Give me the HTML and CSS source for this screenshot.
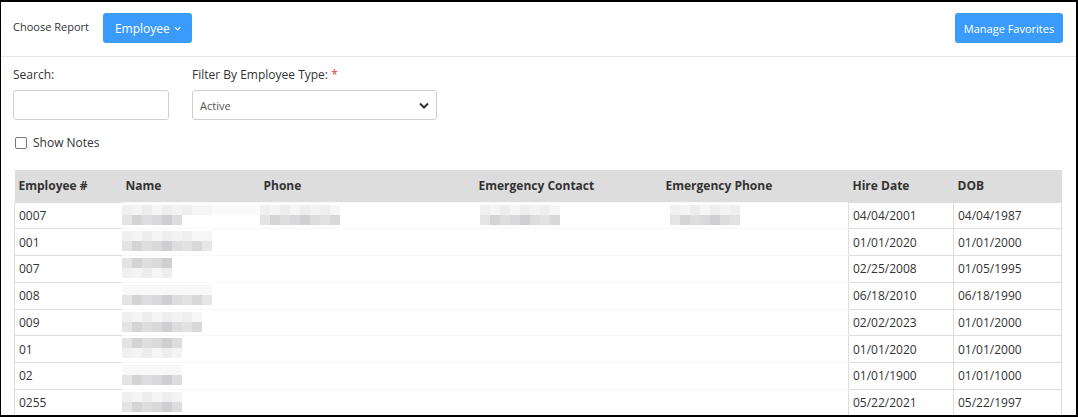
FILE: index.html
```html
<!DOCTYPE html>
<html>
<head>
<meta charset="utf-8">
<link rel="stylesheet" href="styles.css">
</head>
<body>
<div class="frame">
  <div class="topbar">
    <div class="left">
      <span class="choose">Choose Report</span>
      <button class="btn btn-emp">Employee
        <svg width="8" height="5" viewBox="0 0 8 5"><path d="M1 1l3 3 3-3" fill="none" stroke="#fff" stroke-width="1.3"/></svg>
      </button>
    </div>
    <button class="btn btn-fav">Manage Favorites</button>
  </div>
  <div class="filters">
    <div class="fields">
      <div class="field">
        <label class="lbl">Search:</label>
        <div class="input search"></div>
      </div>
      <div class="field">
        <label class="lbl">Filter By Employee Type: <span class="req">*</span></label>
        <div class="input select"><span>Active</span>
          <svg width="10" height="7" viewBox="0 0 10 7"><path d="M1 1.5l4 4 4-4" fill="none" stroke="#333" stroke-width="2"/></svg>
        </div>
      </div>
    </div>
    <div class="check"><span class="box"></span><span>Show Notes</span></div>
  </div>
  <div class="tablewrap">
    <table class="grid">
      <colgroup>
        <col class="c1"><col class="c2"><col class="c3"><col class="c4"><col class="c5"><col class="c6"><col class="c7">
      </colgroup>
      <thead>
        <tr><th>Employee #</th><th>Name</th><th>Phone</th><th>Emergency Contact</th><th>Emergency Phone</th><th>Hire Date</th><th>DOB</th></tr>
      </thead>
      <tbody>
        <tr class="r1"><td>0007</td>
          <td class="bl"><div class="pix"><span class="l" style="width:140px"></span><span class="d" style="width:60px"></span></div></td>
          <td class="bl"><div class="pix"><span class="l" style="width:80px"></span><span class="d" style="width:80px"></span></div></td>
          <td class="bl"><div class="pix pad"><span class="l" style="width:80px"></span><span class="d" style="width:80px"></span></div></td>
          <td class="bl end"><div class="pix pad2"><span class="l" style="width:70px"></span><span class="d" style="width:70px"></span></div></td>
          <td>04/04/2001</td><td>04/04/1987</td></tr>
        <tr><td>001</td>
          <td class="bl"><div class="pix"><span class="l" style="width:90px"></span><span class="d" style="width:90px"></span></div></td>
          <td class="bl"></td><td class="bl"></td><td class="bl end"></td>
          <td>01/01/2020</td><td>01/01/2000</td></tr>
        <tr><td>007</td>
          <td class="bl"><div class="pix"><span class="d" style="width:50px"></span><span class="l" style="width:50px"></span></div></td>
          <td class="bl"></td><td class="bl"></td><td class="bl end"></td>
          <td>02/25/2008</td><td>01/05/1995</td></tr>
        <tr><td>008</td>
          <td class="bl"><div class="pix"><span class="f" style="width:90px"></span><span class="d" style="width:90px"></span></div></td>
          <td class="bl"></td><td class="bl"></td><td class="bl end"></td>
          <td>06/18/2010</td><td>06/18/1990</td></tr>
        <tr><td>009</td>
          <td class="bl"><div class="pix"><span class="l" style="width:80px"></span><span class="d" style="width:80px"></span></div></td>
          <td class="bl"></td><td class="bl"></td><td class="bl end"></td>
          <td>02/02/2023</td><td>01/01/2000</td></tr>
        <tr><td>01</td>
          <td class="bl"><div class="pix"><span class="d" style="width:60px"></span><span class="l" style="width:60px"></span></div></td>
          <td class="bl"></td><td class="bl"></td><td class="bl end"></td>
          <td>01/01/2020</td><td>01/01/2000</td></tr>
        <tr><td>02</td>
          <td class="bl"><div class="pix"><span class="f" style="width:60px"></span><span class="d" style="width:60px"></span></div></td>
          <td class="bl"></td><td class="bl"></td><td class="bl end"></td>
          <td>01/01/1900</td><td>01/01/1000</td></tr>
        <tr><td>0255</td>
          <td class="bl"><div class="pix"><span class="l" style="width:60px"></span><span class="d" style="width:60px"></span></div></td>
          <td class="bl"></td><td class="bl"></td><td class="bl end"></td>
          <td>05/22/2021</td><td>05/22/1997</td></tr>
      </tbody>
    </table>
  </div>
</div>
</body>
</html>
```
FILE: styles.css
```css
* { box-sizing: border-box; }
html, body { margin: 0; padding: 0; background: #fff; }
body { font-family: "Open Sans", "Liberation Sans", sans-serif; color: #333; }
.frame {
  width: 1078px; height: 417px; overflow: hidden;
  border-style: solid; border-color: #000;
  border-width: 2px 2px 2px 1px;
}
.topbar {
  height: 55px;
  display: flex; align-items: flex-start; justify-content: space-between;
  padding: 11px 13px 0 12px;
  border-bottom: 1px solid #e7e7e7;
}
.left { display: flex; align-items: center; gap: 14px; }
.choose { font-size: 11px; color: #333; margin-top: -4px; }
.btn {
  font-family: inherit; color: #fff; background: #3b9bfb; border: none;
  border-radius: 3px; height: 30px; cursor: pointer; white-space: nowrap;
}
.btn-emp { font-size: 12px; padding: 0 11px 0 12px; display: flex; align-items: center; gap: 4px; width: 89px; }
.btn-emp svg { margin-top: 1px; }
.btn-fav { font-size: 11px; padding: 0; width: 108px; }
.filters { padding: 9px 13px 0 12px; }
.fields { display: flex; gap: 23px; }
.field { display: flex; flex-direction: column; }
.lbl { font-size: 12px; line-height: 18px; margin-bottom: 6px; color: #333; }
.req { color: #e43b3b; }
.input { height: 30px; border: 1px solid #cfcfcf; border-radius: 3px; background: #fff; }
.search { width: 156px; }
.select { width: 245px; display: flex; align-items: center; justify-content: space-between; padding: 0 7px 0 7px; font-size: 11px; color: #555; }
.check { display: flex; align-items: center; gap: 6px; margin-top: 14px; font-size: 12px; line-height: 18px; padding-left: 2px; }
.box { width: 12px; height: 12px; border: 1px solid #777; border-radius: 2px; background: #fff; }
.tablewrap { padding: 18px 14px 0 13px; }
.grid { border-collapse: collapse; table-layout: fixed; width: 1047px; font-size: 12px; }
.c1 { width: 107px; } .c2 { width: 138px; } .c3 { width: 215px; } .c4 { width: 187px; }
.c5 { width: 187px; } .c6 { width: 105px; } .c7 { width: 108px; }
.grid th {
  background: #dddddd; text-align: left; font-weight: 700; height: 32px;
  padding: 0 4px; color: #333; border: none;
}
.grid td {
  height: 26.75px; padding: 0 4px; border: 1px solid #dedede; color: #333;
  vertical-align: middle; white-space: nowrap;
}
.grid td.bl {
  border-top-color: #f8f8f8; border-bottom-color: #f8f8f8;
  border-left-style: hidden; border-right-style: hidden;
  padding: 0; vertical-align: top;
}
.grid td.bl.end { border-right-style: solid; border-right-color: #dedede; }
.pix { display: flex; flex-direction: column; padding: 2px 0 0 0; }
.pix.pad { padding-left: 5px; }
.pix.pad2 { padding-left: 8px; }
.pix span { display: block; height: 10px; }
.pix .l { background: linear-gradient(90deg, #f0f0f0 0 10px, #f4f4f4 10px 20px, #ededed 20px 30px, #f5f5f5 30px 40px, #eeeeee 40px 50px, #f3f3f3 50px 60px, #efefef 60px 70px, #f6f6f6 70px 90px, #fafafa 90px); }
.pix .d { background: linear-gradient(90deg, #e4e4e4 0 10px, #d4d4d4 10px 20px, #dedede 20px 30px, #d9d9db 30px 40px, #cfcfd1 40px 50px, #dddddd 50px 60px, #e2e2e2 60px 70px, #d8d8d8 70px 80px, #e6e6e6 80px); }
.pix .f { background: #f8f8f8; }
```
